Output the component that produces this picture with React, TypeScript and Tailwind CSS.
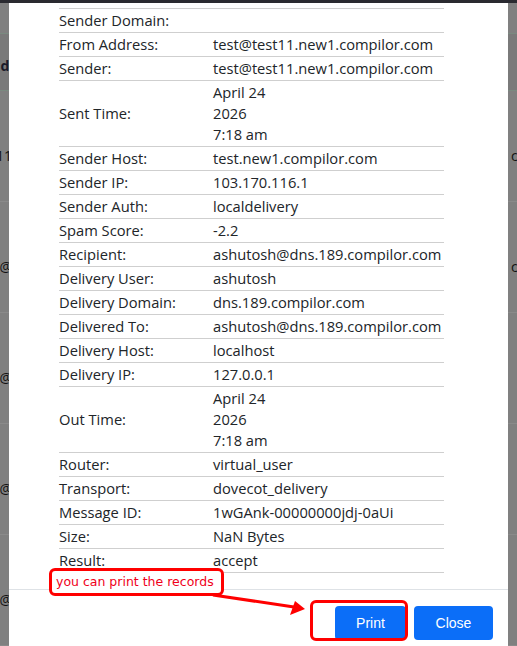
import React from "react";

type Row = { label: string; value: string[] };

const rows: Row[] = [
  { label: "Sender Domain:", value: [""] },
  { label: "From Address:", value: ["test@test11.new1.compilor.com"] },
  { label: "Sender:", value: ["test@test11.new1.compilor.com"] },
  { label: "Sent Time:", value: ["April 24", "2026", "7:18 am"] },
  { label: "Sender Host:", value: ["test.new1.compilor.com"] },
  { label: "Sender IP:", value: ["103.170.116.1"] },
  { label: "Sender Auth:", value: ["localdelivery"] },
  { label: "Spam Score:", value: ["-2.2"] },
  { label: "Recipient:", value: ["ashutosh@dns.189.compilor.com"] },
  { label: "Delivery User:", value: ["ashutosh"] },
  { label: "Delivery Domain:", value: ["dns.189.compilor.com"] },
  { label: "Delivered To:", value: ["ashutosh@dns.189.compilor.com"] },
  { label: "Delivery Host:", value: ["localhost"] },
  { label: "Delivery IP:", value: ["127.0.0.1"] },
  { label: "Out Time:", value: ["April 24", "2026", "7:18 am"] },
  { label: "Router:", value: ["virtual_user"] },
  { label: "Transport:", value: ["dovecot_delivery"] },
  { label: "Message ID:", value: ["1wGAnk-00000000jdj-0aUi"] },
  { label: "Size:", value: ["NaN Bytes"] },
  { label: "Result:", value: ["accept"] },
];

const bgRows = [
  { left: "test@test11", right: "com" },
  { left: "ashutosh@", right: "com" },
  { left: "ashutosh@", right: "" },
  { left: "ashutosh@", right: "" },
  { left: "ashutosh@", right: "" },
];

export default function App() {
  return (
    <div
      className="relative h-[646px] w-[517px] overflow-hidden bg-[#808080]"
      style={{ fontFamily: "'Open Sans', 'Liberation Sans', sans-serif" }}
    >
      {/* background page (dimmed) */}
      <div className="absolute inset-0 flex flex-col text-[14px] text-[#111]">
        <div className="h-[3px] bg-[#2a2a30]" />
        <div className="h-[32px]" />
        <div className="flex h-[60px] items-center justify-between border-y border-[#7a8a80] bg-[#7a7a7a] pt-[6px]">
          <span className="ml-[-18px] whitespace-nowrap font-bold text-[#1a1a2a]">Address</span>
        </div>
        {bgRows.map((r, i) => (
          <div
            key={i}
            className="flex h-[111px] shrink-0 items-center justify-between border-b border-[#8a8a8a] pt-[18px]"
          >
            <div className="flex w-[12px] justify-end overflow-hidden">
              <span className="whitespace-nowrap">{r.left}</span>
            </div>
            <span className="mr-[-22px] whitespace-nowrap">{r.right}</span>
          </div>
        ))}
      </div>

      {/* modal */}
      <div className="absolute bottom-0 left-[9px] top-[3px] flex w-[499px] flex-col bg-white">
        <div className="pl-[50px] pt-[5px]">
          <div className="w-[385px] border-b border-[#cfcfcf] text-[14.7px] leading-[21px] text-[#212529]">
            {rows.map((r) => (
              <div key={r.label} className="flex border-t border-[#cfcfcf] py-[1px]">
                <div className="flex w-[154px] shrink-0 items-center">{r.label}</div>
                <div className="flex flex-col">
                  {r.value.map((v, j) => (
                    <span key={j} className="whitespace-nowrap">
                      {v || "\u00a0"}
                    </span>
                  ))}
                </div>
              </div>
            ))}
          </div>
        </div>
        <div className="mt-[16px] flex justify-end gap-[8px] border-t border-[#dee2e6] pr-[15px] pt-[16px]">
          <button
            className="h-[34px] w-[71px] rounded-[4px] bg-[#0b6ef8] text-[14px] text-white"
            style={{ fontFamily: "'Liberation Sans', Arial, sans-serif" }}
          >
            Print
          </button>
          <button
            className="h-[34px] w-[79px] rounded-[4px] bg-[#0b6ef8] text-[14px] text-white"
            style={{ fontFamily: "'Liberation Sans', Arial, sans-serif" }}
          >
            Close
          </button>
        </div>
      </div>

      {/* annotations */}
      <div
        className="absolute left-[49px] top-[568px] flex h-[28px] w-[175px] items-center rounded-[6px] border-[3px] border-[#ff0000] bg-white pl-[4px] text-[12.5px] text-[#f0001a]"
        style={{ fontFamily: "'DejaVu Sans', Verdana, sans-serif" }}
      >
        you can print the records
      </div>
      <div className="absolute left-[310px] top-[600px] h-[41px] w-[98px] rounded-[6px] border-[3px] border-[#ff0000]" />
      <svg className="absolute left-0 top-0" width="517" height="646" viewBox="0 0 517 646">
        <line x1="213" y1="595" x2="294" y2="607" stroke="#ff0000" strokeWidth="3" />
        <polygon points="305,609 295,601 290,615" fill="#ff0000" />
      </svg>
    </div>
  );
}
